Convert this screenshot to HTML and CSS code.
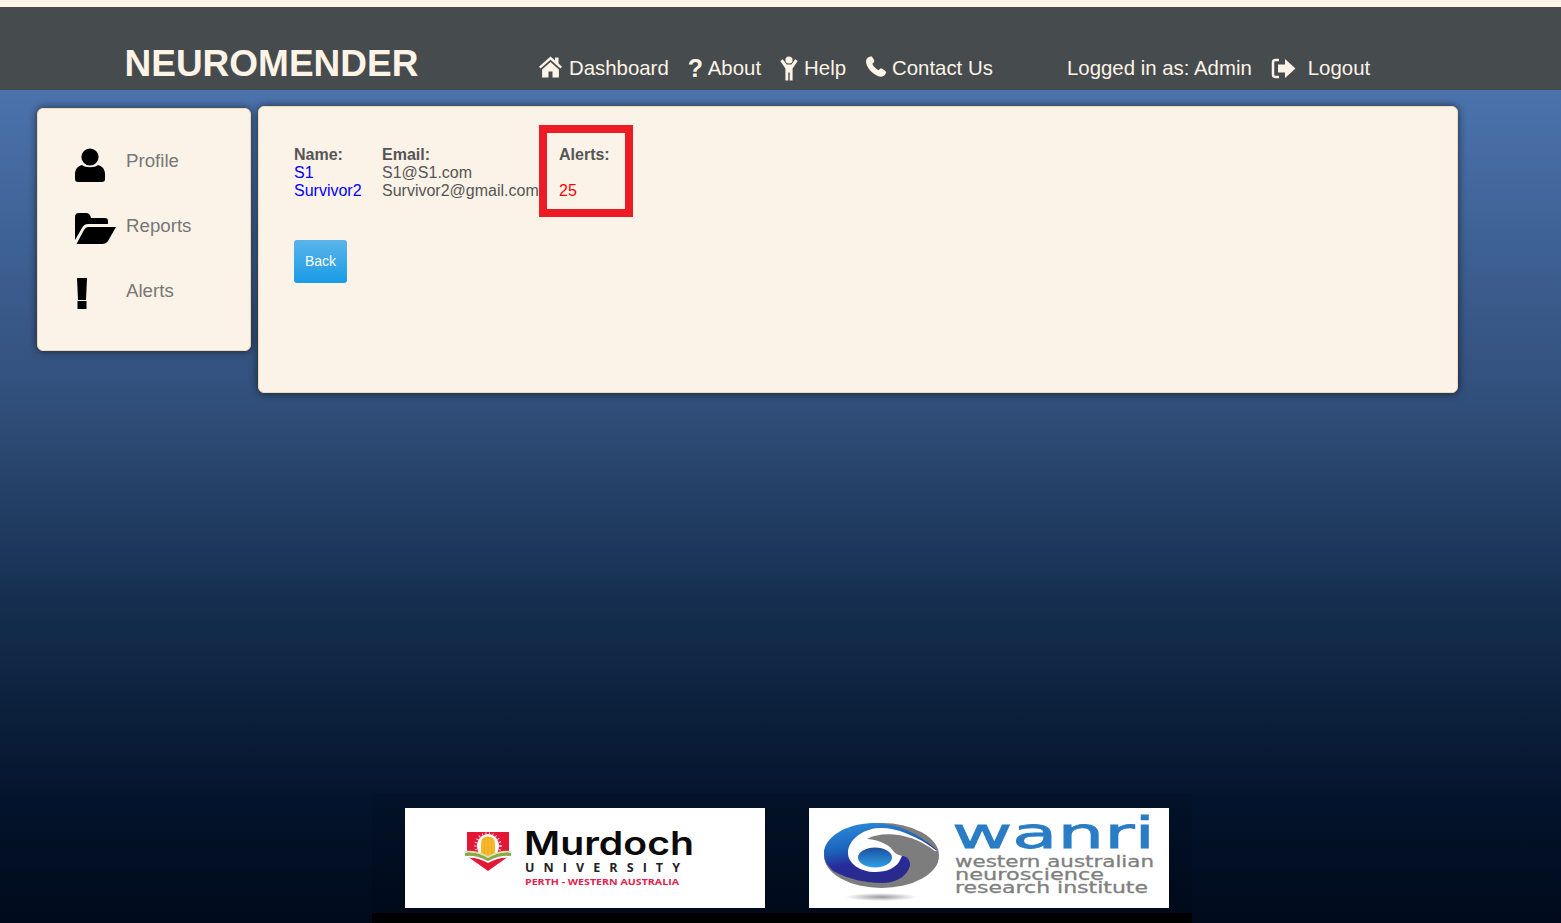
FILE: index.html
```html
<!DOCTYPE html>
<html lang="en">
<head>
  <meta charset="UTF-8" />
  <meta name="viewport" content="width=device-width, initial-scale=1.0" />
  <title>Neuromender</title>
  <link rel="stylesheet" href="styles.css">
</head>
<body>
  <header class="topbar">
    <div class="brand">NEUROMENDER</div>
    <nav class="nav">
      <a class="nav-link" href="#">
        <svg class="ico-home" viewBox="0 0 24 22"><path d="M12 0.5 L0.5 10.8 l1.6 1.8 L12 3.8 l9.9 8.8 1.6-1.8 L20 7.6 V1.5 h-3.4 v3z"/><path d="M12 6 L3.6 13.4 V21.5 H10 V15.5 H14 V21.5 H20.4 V13.4z"/></svg>
        Dashboard
      </a>
      <a class="nav-link" href="#"><span class="ico-question">?</span>About</a>
      <a class="nav-link" href="#">
        <svg class="ico-help" viewBox="0 0 18 25"><circle cx="9" cy="4" r="3.6"/><path d="M0.3 5 L2.8 3.2 L6.6 8.6 H11.4 L15.2 3.2 L17.7 5 L12.6 12.6 V24.5 H9.7 V16.5 H8.3 V24.5 H5.4 V12.6z"/></svg>
        Help
      </a>
      <a class="nav-link" href="#">
        <svg class="ico-phone" viewBox="0 0 24 24"><path d="M6.6 0.8 L3.2 2.2 C1 3.8 0.6 7 1.8 10.2 C3.8 15.4 8.8 20.4 14 22.4 C17.2 23.6 20.2 23.2 22 20.8 L23.2 18.2 C23.2 17 18.4 13.8 17.2 13.8 L14.6 16 C12.2 15 9 11.6 8 9 L10.2 6.8 C10.6 5.8 8 0.8 6.6 0.8z"/></svg>
        Contact Us
      </a>
    </nav>
    <div class="account">
      <span>Logged in as: Admin</span>
      <a class="nav-link logout" href="#">
        <svg class="ico-logout" viewBox="0 0 25 21"><path class="ico-line" d="M8 2 H4.5 Q2 2 2 4.5 V16.5 Q2 19 4.5 19 H8"/><path d="M7 6.5 H14 V1 L24.5 10.5 L14 20 V14.5 H7z"/></svg>
        Logout
      </a>
    </div>
  </header>

  <main class="content">
    <aside class="sidebar">
      <a class="side-item" href="#">
        <svg class="side-ico ico-user" viewBox="0 0 30 34"><circle cx="15" cy="9" r="8.6"/><path d="M7 17 C10 20 20 20 23 17 C27 18 30 21 30 26 V31 Q30 34 27 34 H3 Q0 34 0 31 V26 C0 21 3 18 7 17z"/></svg>
        <span>Profile</span>
      </a>
      <a class="side-item" href="#">
        <svg class="side-ico ico-folder" viewBox="0 0 41 31"><path d="M0 4 Q0 0 4 0 H11 Q15 0 16 5 H30 Q33 5 33 8 V11 H13 Q9 11 7 15 L0 27z"/><path d="M13 14 H41 L33 28 Q31 31 27 31 H1.500 L9 17 Q10.500 14 13 14z"/></svg>
        <span>Reports</span>
      </a>
      <a class="side-item" href="#">
        <svg class="side-ico ico-alert" viewBox="0 0 10 31"><path d="M0 0 H10 L9 22 H1z"/><rect x="0.500" y="23" width="9" height="8"/></svg>
        <span>Alerts</span>
      </a>
    </aside>

    <section class="panel">
      <div class="users">
        <b>Name:</b><b>Email:</b><b class="alert-col">Alerts:</b>
        <a class="user-link" href="#">S1</a><span>S1@S1.com</span><span></span>
        <a class="user-link" href="#">Survivor2</a><span>Survivor2@gmail.com</span><span class="alert-col alert-count">25</span>
      </div>
      <a class="back-btn" href="#">Back</a>
      <div class="highlight"></div>
    </section>
  </main>

  <footer class="footer">
    <div class="logos">
      <svg class="logo" viewBox="0 0 360 100">
        <rect width="360" height="100" fill="#fff"/>
        <path d="M62 24 H104 V48 L83 63 L62 48z" fill="#e31837"/>
        <ellipse cx="83" cy="38" rx="11" ry="12" fill="#fff"/>
        <circle cx="83" cy="38" r="12.500" fill="none" stroke="#fbd5d5" stroke-width="2.500" stroke-dasharray="1 2.500"/>
        <path d="M76 47 V35 Q76 28.500 83 28.500 Q90 28.500 90 35 V47 Q83 51 76 47z" fill="#fbb829"/>
        <path d="M79.500 30 V48 M83 29 V49 M86.500 30 V48" stroke="#eda21f" stroke-width="0.800"/>
        <path d="M60 43 Q72 42 83 48 Q94 42 106 43 V45 Q94 44 83 50 Q72 44 60 45z" fill="#d8e6b8"/>
        <path d="M60 45 Q72 44 83 50 Q94 44 106 45 V48 Q94 47 83 53 Q72 47 60 48z" fill="#86ad45"/>
        <path d="M61 48 Q72 47 83 53 Q94 47 105 48 V50 Q94 49 83 55 Q72 49 61 50z" fill="#fff"/>
        <text class="m-name" x="119" y="47" textLength="170" lengthAdjust="spacingAndGlyphs">Murdoch</text>
        <text class="m-uni" x="120" y="64" textLength="155" lengthAdjust="spacing">UNIVERSITY</text>
        <text class="m-place" x="120" y="77" textLength="154" lengthAdjust="spacingAndGlyphs">PERTH - WESTERN AUSTRALIA</text>
      </svg>
      <svg class="logo" viewBox="0 0 360 100">
        <defs>
          <linearGradient id="swirl" x1="0" y1="0" x2="0.300" y2="1">
            <stop offset="0" stop-color="#2f8fdc"/>
            <stop offset="0.450" stop-color="#1c63bb"/>
            <stop offset="0.700" stop-color="#272b9a"/>
            <stop offset="1" stop-color="#2a2a8c"/>
          </linearGradient>
          <linearGradient id="pupil" x1="0" y1="0" x2="0" y2="1">
            <stop offset="0" stop-color="#1d4f9e"/>
            <stop offset="1" stop-color="#2f9fe6"/>
          </linearGradient>
          <radialGradient id="shade">
            <stop offset="0" stop-color="#999"/>
            <stop offset="1" stop-color="#fff"/>
          </radialGradient>
        </defs>
        <rect width="360" height="100" fill="#fff"/>
        <ellipse cx="72" cy="89" rx="36" ry="4" fill="url(#shade)"/>
        <ellipse cx="72.500" cy="47.500" rx="57.500" ry="32.500" fill="#7d7d7d"/>
        <path d="M128 42 C108 24 85 15 66 15 C36 15 15 30 15 45 C15 54 20 60 26 64 C40 71 56 75 73 75 C85 75 97 70 101 58 C102 53 98 47 93 48 L70 40z" fill="url(#swirl)"/>
        <path d="M128 43 C108 27 85 19 70 20 C52 21 39 33 39 45 C39 56 52 64 66 64 C78 64 86 60 90 54 C91 52 92 50 93 48 L100 44z" fill="#fff"/>
        <path d="M58 31 C75 22 105 26 127 44 C132 52 128 60 120 64 C112 69 100 72 92 73 C98 69 101 63 101 58 C102 53 98 47 93 48 C90 47 87 46 85 44 C82 38 72 32 58 31z" fill="#7d7d7d"/>
        <ellipse cx="66" cy="49.500" rx="17" ry="10" fill="url(#pupil)"/>
        <text class="w-name" x="143" y="40" textLength="203" lengthAdjust="spacingAndGlyphs">wanri</text>
        <text class="w-line" x="146" y="59" textLength="199" lengthAdjust="spacingAndGlyphs">western australian</text>
        <text class="w-line" x="146" y="72" textLength="149" lengthAdjust="spacingAndGlyphs">neuroscience</text>
        <text class="w-line" x="146" y="85" textLength="193" lengthAdjust="spacingAndGlyphs">research institute</text>
      </svg>
    </div>
    <div class="footer-strip"></div>
  </footer>
</body>
</html>
```

FILE: styles.css
```css
* {
  box-sizing: border-box;
}

html, body {
  height: 100%;
}

body {
  margin: 0;
  display: flex;
  flex-direction: column;
  overflow: hidden;
  background: linear-gradient(180deg, #4c73ad 90px, #304e79 410px, #162f50 600px, #04142c 800px, #000a1c 923px);
  font-family: "Liberation Sans", Arial, sans-serif;
  color: #555;
}

a {
  text-decoration: none;
}

/* header */
.topbar {
  display: flex;
  align-items: flex-end;
  height: 90px;
  padding: 0 0 9px 125px;
  border-top: 7px solid #fdf3e7;
  background: #464b4e;
  color: #fdf3e7;
  font-size: 20.400px;
}

.brand {
  width: 413px;
  font-size: 37px;
  font-weight: bold;
  line-height: 42px;
  margin: 0 0 -4px;
  text-indent: -0.500px;
}

.nav {
  display: flex;
  gap: 19px;
  width: 529px;
}

.nav-link {
  display: flex;
  align-items: center;
  gap: 6px;
  color: #fdf3e7;
  line-height: 26px;
  white-space: nowrap;
}

.nav-link svg {
  fill: #fdf3e7;
  flex: none;
}

.ico-home {
  width: 25px;
  height: 22px;
  margin-top: -2px;
}

.ico-question {
  font-size: 25px;
  font-weight: bold;
  width: 14px;
}

.ico-help {
  width: 18px;
  height: 25px;
  margin-top: 2px;
}

.ico-phone {
  width: 22px;
  height: 23px;
  margin-right: -1px;
  margin-top: -2px;
}

.account {
  display: flex;
  gap: 19px;
  line-height: 26px;
}

.logout {
  gap: 12px;
}

.ico-logout {
  width: 25px;
  height: 21px;
}

.nav-link .ico-line {
  fill: none;
  stroke: #fdf3e7;
  stroke-width: 2.500;
}

/* main area */
.content {
  display: flex;
  align-items: flex-start;
  gap: 7px;
  padding: 16px 0 0 37px;
}

.sidebar {
  width: 214px;
  height: 243px;
  margin-top: 2px;
  padding: 27px 0 0 37px;
  background: #fcf3e8;
  border-radius: 6px;
  border: 1px solid #f5d9b4;
  box-shadow: 0 0 8px rgba(0, 0, 0, 0.6);
}

.side-item {
  display: grid;
  grid-template-columns: 51px auto;
  align-items: start;
  height: 65px;
  color: #777;
  font-size: 18.700px;
  line-height: 50px;
}

.side-ico {
  fill: #000;
  margin-top: 12px;
}

.ico-user {
  width: 30px;
  height: 34px;
}

.ico-folder {
  width: 41px;
  height: 31px;
  margin-top: 12px;
}

.ico-alert {
  width: 10px;
  height: 31px;
  margin-left: 2px;
  margin-top: 12px;
}

.panel {
  position: relative;
  width: 1200px;
  height: 287px;
  padding: 39px 0 0 35px;
  background: #fcf3e8;
  border-radius: 6px;
  border: 1px solid #f5d9b4;
  box-shadow: 0 0 8px rgba(0, 0, 0, 0.6);
  font-size: 16px;
  line-height: 18px;
}

.users {
  display: grid;
  grid-template-columns: 88px 177px auto;
  justify-content: start;
}

.user-link {
  color: #0000ff;
}

.alert-count {
  color: #ff0000;
}

.back-btn {
  display: block;
  width: 53px;
  height: 43px;
  margin-top: 40px;
  background: linear-gradient(180deg, #5ab4ea, #1a9be6);
  border-radius: 3px;
  color: #fff;
  font-size: 14px;
  line-height: 43px;
  text-align: center;
}

/* red marker drawn over the alerts column */
.highlight {
  position: absolute;
  left: 280px;
  top: 18px;
  width: 94px;
  height: 92px;
  border: 8px solid #ed1c24;
}

/* footer */
.footer {
  width: 820px;
  margin: auto 0 0 372px;
  background: rgba(0, 0, 0, 0.08);
}

.logos {
  display: flex;
  gap: 44px;
  padding: 15px 0 5px 33px;
}

.logo {
  display: block;
  width: 360px;
  height: 100px;
}

.footer-strip {
  height: 10px;
  background: #000;
}

.m-name {
  font-family: Inter, sans-serif;
  font-size: 32px;
  font-weight: 600;
  fill: #0a0a0a;
}

.m-uni {
  font-family: "Open Sans", sans-serif;
  font-size: 12.500px;
  font-weight: 700;
  fill: #222;
}

.m-place {
  font-family: "Open Sans", sans-serif;
  font-size: 9.500px;
  font-weight: 700;
  fill: #e0234e;
}

.w-name {
  font-family: "DejaVu Sans", sans-serif;
  font-size: 43px;
  fill: #2a7cc4;
  stroke: #2a7cc4;
  stroke-width: 0.800px;
}

.w-line {
  font-family: "DejaVu Sans", sans-serif;
  font-size: 15px;
  fill: #7f7f7f;
  stroke: #7f7f7f;
  stroke-width: 0.300px;
}
```
